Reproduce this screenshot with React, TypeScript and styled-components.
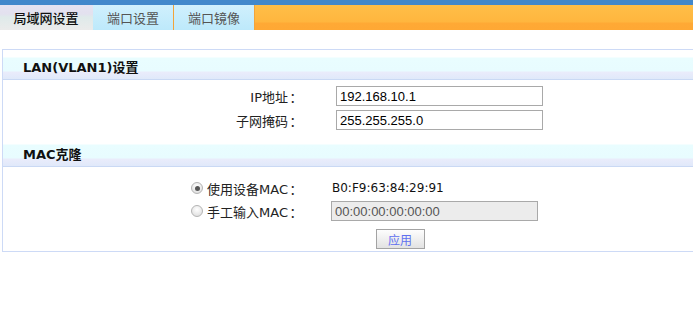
import styled, { createGlobalStyle } from "styled-components";

const GlobalStyle = createGlobalStyle`
  html, body {
    margin: 0;
    padding: 0;
    background: #ffffff;
    overflow: hidden;
  }
  body {
    font-family: "DejaVu Sans", "Noto Sans CJK SC", sans-serif;
    font-size: 12px;
    color: #222;
  }
`;

const Page = styled.div`
  width: 693px;
  height: 311px;
  display: flex;
  flex-direction: column;
`;

const TopLine = styled.div`
  height: 5px;
  background: #4288cb;
`;

const TabBar = styled.div`
  height: 25px;
  display: flex;
  background: linear-gradient(
    #ffbe48 0px,
    #ffb63e 17px,
    #ffa935 18px,
    #ffa834 25px
  );
`;

const Tab = styled.div<{ $active?: boolean }>`
  width: ${(p) => (p.$active ? "92px" : "80px")};
  display: flex;
  align-items: center;
  justify-content: center;
  font-family: "Noto Sans CJK SC", sans-serif;
  font-size: 13px;
  color: ${(p) => (p.$active ? "#111" : "#555")};
  font-weight: ${(p) => (p.$active ? 500 : 400)};
  border-right: 1px solid ${(p) => (p.$active ? "transparent" : "#f2a43a")};
  background: ${(p) =>
    p.$active
      ? "linear-gradient(#e6e3f1 0px, #e3e1ef 9px, #dfeaea 12px, #ebebeb 25px)"
      : "linear-gradient(#d0f0fd, #bde9fb)"};
`;

const Panel = styled.div`
  margin: 19px 0 0 2px;
  width: 720px;
  border: 1px solid #cddaf6;
  display: flex;
  flex-direction: column;
`;

const SectionHead = styled.div`
  height: 30px;
  padding: 3px 0 0 20px;
  box-sizing: border-box;
  display: flex;
  align-items: center;
  font-weight: bold;
  font-size: 13px;
  color: #111;
  border-bottom: 1px solid #cad9f4;
  background: linear-gradient(
    #ffffff 0px,
    #ffffff 7px,
    #e9fdff 8px,
    #e8fcff 21px,
    #eaecfb 22px,
    #e0e9fa 29px
  );
`;

const Section = styled.div<{ $top: number; $bottom: number; $gap: number }>`
  display: flex;
  flex-direction: column;
  gap: ${(p) => p.$gap}px;
  padding: ${(p) => p.$top}px 0 ${(p) => p.$bottom}px 0;
`;

const Row = styled.div`
  height: 22px;
  display: grid;
  grid-template-columns: 301px 1fr;
  align-items: center;
`;

const Label = styled.label`
  display: flex;
  justify-content: flex-end;
  align-items: center;
  white-space: nowrap;
  font-size: 13px;
`;

const Colon = styled.span`
  display: inline-block;
  width: 16px;
  text-align: center;
  font-family: "Noto Sans CJK SC", sans-serif;
`;

const Field = styled.div<{ $indent: number }>`
  padding-left: ${(p) => p.$indent}px;
  display: flex;
  align-items: center;
`;

const TextInput = styled.input`
  width: 207px;
  height: 20px;
  box-sizing: border-box;
  border: 1px solid #a9a9a9;
  padding: 0 3px;
  font-family: "Liberation Sans", Arial, sans-serif;
  font-size: 13px;
  color: #000;
  background: #fff;
  outline: none;
  &:disabled {
    background: #ececec;
    color: #555;
  }
`;

const MacValue = styled.span`
  font-size: 12px;
  color: #111;
`;

const Radio = styled.input`
  appearance: none;
  margin: 0 4px 0 0;
  width: 12px;
  height: 12px;
  border-radius: 50%;
  border: 1px solid #b4b4b4;
  background: radial-gradient(circle at 50% 35%, #ffffff, #d9d9d9);
  position: relative;
  &:checked::after {
    content: "";
    position: absolute;
    left: 2.5px;
    top: 2.5px;
    width: 5px;
    height: 5px;
    border-radius: 50%;
    background: #555;
  }
`;

const ButtonRow = styled.div`
  display: flex;
  justify-content: center;
  padding: 6px 0 0 74px;
`;

const Button = styled.button`
  width: 49px;
  height: 20px;
  border: 1px solid #a3a3a3;
  background: linear-gradient(#fdfdfd, #e2e2e2);
  color: #6070f0;
  font-family: "Noto Sans CJK SC", sans-serif;
  font-size: 12px;
  padding: 0;
`;

export default function App() {
  return (
    <Page>
      <GlobalStyle />
      <TopLine />
      <TabBar>
        <Tab $active>局域网设置</Tab>
        <Tab>端口设置</Tab>
        <Tab>端口镜像</Tab>
      </TabBar>
      <Panel>
        <SectionHead>LAN(VLAN1)设置</SectionHead>
        <Section $top={5} $bottom={6} $gap={2}>
          <Row>
            <Label>
              IP地址<Colon>：</Colon>
            </Label>
            <Field $indent={32}>
              <TextInput defaultValue="192.168.10.1" />
            </Field>
          </Row>
          <Row>
            <Label>
              子网掩码<Colon>：</Colon>
            </Label>
            <Field $indent={32}>
              <TextInput defaultValue="255.255.255.0" />
            </Field>
          </Row>
        </Section>
        <SectionHead>MAC克隆</SectionHead>
        <Section $top={10} $bottom={2} $gap={1}>
          <Row>
            <Label>
              <Radio type="radio" name="mac" defaultChecked />
              使用设备MAC<Colon>：</Colon>
            </Label>
            <Field $indent={28}>
              <MacValue>B0:F9:63:84:29:91</MacValue>
            </Field>
          </Row>
          <Row>
            <Label>
              <Radio type="radio" name="mac" />
              手工输入MAC<Colon>：</Colon>
            </Label>
            <Field $indent={27}>
              <TextInput defaultValue="00:00:00:00:00:00" disabled />
            </Field>
          </Row>
          <ButtonRow>
            <Button>应用</Button>
          </ButtonRow>
        </Section>
      </Panel>
    </Page>
  );
}
